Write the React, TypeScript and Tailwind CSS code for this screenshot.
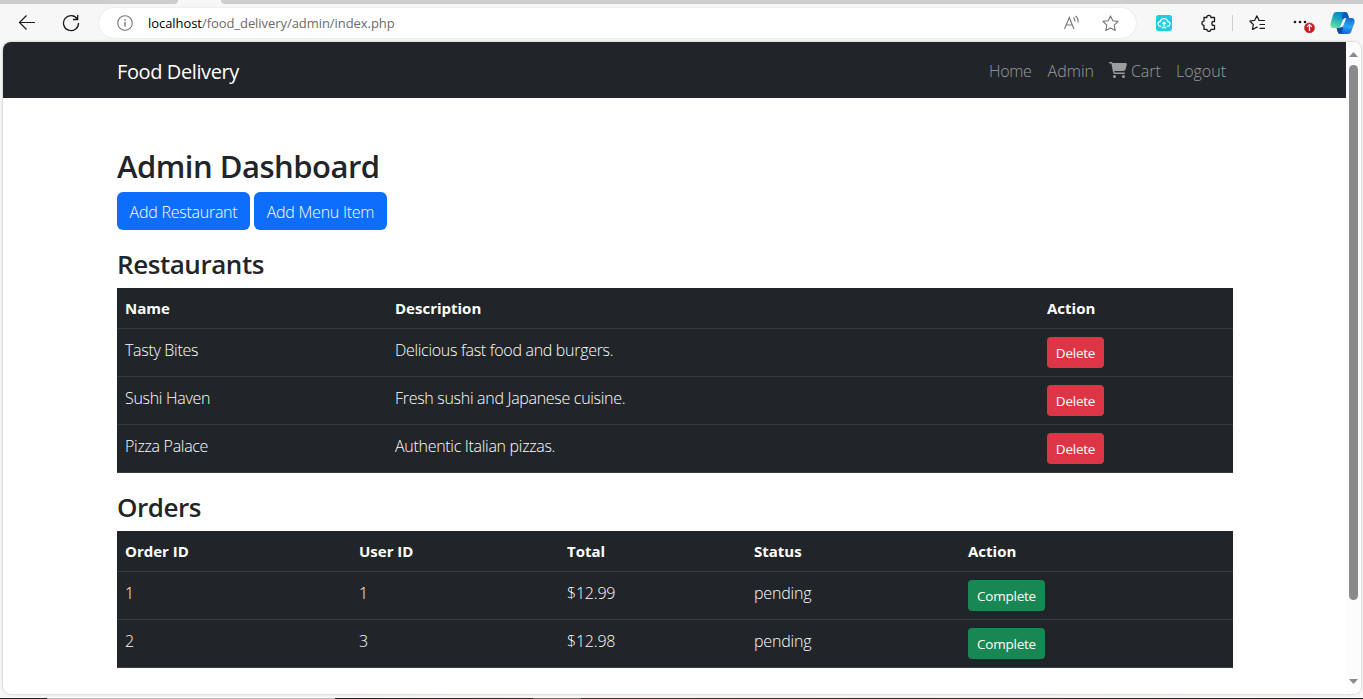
import React from "react";

type Tone = "danger" | "success";

function SmallButton({ tone, children }: { tone: Tone; children: React.ReactNode }) {
  const look = tone === "danger" ? "bg-[#dc3545] w-[57px]" : "bg-[#198754] w-[77px]";
  return (
    <button className={`-mt-px flex h-[31px] items-center justify-center whitespace-nowrap rounded-[4px] pt-px text-[13.5px] font-normal leading-[21px] tracking-[-0.25px] text-white ${look}`}>
      {children}
    </button>
  );
}

function Toolbar() {
  return (
    <div className="flex h-[38px] items-center bg-[#f7f7f7]">
      <svg className="ml-[18px] shrink-0" width="18" height="16" viewBox="0 0 18 16" fill="none" stroke="#1b1b1b" strokeWidth="1.2">
        <path d="M17 7.500H1.500M8.500.5 1.500 7.500l7 7" />
      </svg>
      <svg className="ml-[26px] shrink-0" width="18" height="18" viewBox="0 0 18 18" fill="none" stroke="#1b1b1b" strokeWidth="1.3">
        <path d="M15.400 5.200A7.500 7.500 0 1 0 16.500 9M15.700 1v4.500h-4.700" />
      </svg>
      <div className="ml-[19px] flex h-[30px] w-[1037px] shrink-0 items-center rounded-full bg-white shadow-[0_0_2px_rgba(0,0,0,0.12)]">
        <svg className="ml-[18px] shrink-0" width="16" height="16" viewBox="0 0 16 16" fill="none" stroke="#767676" strokeWidth="1.1">
          <circle cx="8" cy="8" r="7.3" />
          <path d="M8 7v4.500M8 4.300v1.400" strokeWidth="1.4" />
        </svg>
        <div className="ml-[15px] whitespace-nowrap text-[13px] leading-[18px] tracking-[-0.06px] text-[#6b6b6b]">
          <span className="text-black">localhost</span>/food_delivery/admin/index.php
        </div>
        <svg className="ml-auto shrink-0" width="17" height="16" viewBox="0 0 17 16" fill="none" stroke="#767676" strokeWidth="1.1">
          <path d="M1.500 14 6.300 2.500 11 14M3.100 10h6.300M10.300 2.500q2 1.500 1.600 4M12.300 1q3.600 2.200 2.700 6.500" />
        </svg>
        <svg className="ml-[22px] mr-[17px] shrink-0" width="17" height="17" viewBox="0 0 17 17" fill="none" stroke="#767676" strokeWidth="1.1" strokeLinejoin="round">
          <path d="m8.500.9 2.300 4.800 5.300.7-3.900 3.700 1 5.300-4.700-2.500-4.700 2.500 1-5.300L.9 6.400l5.300-.7z" />
        </svg>
      </div>
      <svg className="ml-[20px] shrink-0" width="16" height="16" viewBox="0 0 16 16">
        <rect width="16" height="16" rx="2.500" fill="#20cbe3" />
        <path d="M5.300 11.200H4.700a2.300 2.300 0 0 1-.6-4.600 4 4 0 0 1 7.800 0 2.300 2.300 0 0 1-.6 4.600h-.6M8 7v5.500M6.200 9 8 7.200 9.800 9M5.800 12.700h4.400" fill="none" stroke="#fff" strokeWidth="1.2" />
      </svg>
      <svg className="ml-[28px] shrink-0" width="18" height="18" viewBox="0 0 18 18" fill="none" stroke="#1b1b1b" strokeWidth="1.3" strokeLinejoin="round">
        <path d="M4 3.500h2.800a2.100 2.100 0 0 1 4.200 0h3.500v4h-.8a1.900 1.900 0 0 0 0 3.800h.8v4H11a2.100 2.100 0 0 1-4.200 0H4v-4a2.100 2.100 0 0 1 0-4.200z" />
      </svg>
      <div className="ml-[14px] h-4 w-px shrink-0 bg-[#cfcfcf]" />
      <svg className="ml-[16px] shrink-0" width="17" height="16" viewBox="0 0 17 16" fill="none" stroke="#1b1b1b" strokeWidth="1.2" strokeLinejoin="round">
        <path d="M10.200 5.500 7.800.9 5.600 5.400.8 6l3.500 3.500-.8 5 5-2.600M9.500 5.500H16M10.500 9.500H16M10.500 13.300H16" />
      </svg>
      <svg className="ml-[27px] shrink-0" width="22" height="20" viewBox="0 0 22 20">
        <g fill="#1b1b1b"><circle cx="2" cy="9" r="1.300" /><circle cx="7" cy="9" r="1.300" /><circle cx="12" cy="9" r="1.300" /></g>
        <circle cx="16.500" cy="14.900" r="5" fill="#c42124" stroke="#c42124" strokeWidth=".6" />
        <path d="M16.500 17.900v-6M14.100 13.900 16.500 11.500l2.400 2.400" fill="none" stroke="#fff" strokeWidth="1.200" />
      </svg>
      <svg className="ml-[15px] shrink-0" width="25" height="24" viewBox="0 0 25 24">
        <defs>
          <linearGradient id="cpA" x1=".7" y1="0" x2=".2" y2="1"><stop stopColor="#0b78bd" /><stop offset=".45" stopColor="#19a5c4" /><stop offset="1" stopColor="#6fe39a" /></linearGradient>
          <linearGradient id="cpB" x1=".6" y1="0" x2=".4" y2="1"><stop stopColor="#1a6bd0" /><stop offset=".5" stopColor="#2aa7f2" /><stop offset="1" stopColor="#155be0" /></linearGradient>
        </defs>
        <path d="M6.500 1H15q2.200 0 2.800 2l1.200 4h-2.500q-2.200 0-2.800 2l-2 6q-.7 2-3 2H3.500Q-.5 17 .6 12L3 4q.8-3 3.500-3z" fill="url(#cpA)" />
        <path d="M14 1h1q2.200 0 2.800 2l1.200 4h-2.500q-2.200 0-2.800 2L12 7q0-4 2-6z" fill="#0d59b5" />
        <path d="M18 23h-7.500q-2.200 0-2.700-2l-1.200-4h2q2.200 0 2.800-2l2.300-6q.7-2 2.900-2h5q3.800 0 2.700 5l-2.800 8q-.9 3-3.500 3z" fill="url(#cpB)" />
        <path d="M10.500 23q-2.200 0-2.700-2l-1.200-4h2q2.200 0 2.800-2l1.600 2q-.3 4-2.500 6z" fill="#0a4aa3" />
        <path d="m9.700 16.500 3.200-7.500q.7-2 3.300-2l-2.600 7q-.9 2.500-3.900 2.500z" fill="#f7f7f7" />
      </svg>
    </div>
  );
}

const restaurants = [
  ["Tasty Bites", "Delicious fast food and burgers."],
  ["Sushi Haven", "Fresh sushi and Japanese cuisine."],
  ["Pizza Palace", "Authentic Italian pizzas."],
];
const orders = [
  ["1", "1", "$12.99", "pending"],
  ["2", "3", "$12.98", "pending"],
];

export default function App() {
  return (
    <div className="flex h-[699px] w-[1363px] flex-col overflow-hidden bg-[#f7f7f7] font-['Open_Sans','Noto_Sans',sans-serif] text-[#212529]">
      <div className="flex h-1 justify-between bg-[#f7f7f7]">
        <div className="w-[178px] rounded-br bg-[#cdcdcd]" />
        <div className="w-[1133px] rounded-bl bg-[#cdcdcd] grow-0 basis-[1142px]" />
      </div>
      <Toolbar />
      <div className="ml-[3px] flex h-[652px] w-[1358px] shrink-0 overflow-hidden rounded-lg bg-white shadow-[0_0_2px_1px_#d5d8d8]">
        <div className="w-[1343px]">
          <nav className="flex h-14 items-center bg-[#212529] pl-[114px] pr-[120px] text-[#9b9d9e]">
            <span className="pt-[3px] text-[20px] leading-[30px] tracking-[-0.4px] text-white">Food Delivery</span>
            <div className="ml-auto flex gap-4 pt-px text-[16px] font-light leading-6">
              <a className="tracking-[-0.3px]">Home</a>
              <a>Admin</a>
              <a className="flex items-center gap-1">
                <svg className="-ml-px -mt-0.5" width="18" height="16" viewBox="0 0 576 512" fill="currentColor"><path d="M0 24C0 10.700 10.700 0 24 0h45.500c22 0 41.500 12.800 50.600 32h411c26.300 0 45.500 25 38.600 50.400l-41 152.300c-8.500 31.400-37 53.300-69.500 53.300H170.700l5.400 28.500c2.200 11.300 12.100 19.500 23.600 19.500H488c13.300 0 24 10.700 24 24s-10.700 24-24 24H199.700c-34.600 0-64.300-24.600-70.700-58.500L77.400 54.500C76.700 50.700 73.400 48 69.500 48H24C10.700 48 0 37.300 0 24zM128 464a48 48 0 1 1 96 0 48 48 0 1 1-96 0zm336-48a48 48 0 1 1 0 96 48 48 0 1 1 0-96z" /></svg>
                Cart
              </a>
              <a className="-ml-px">Logout</a>
            </div>
          </nav>
          <main className="px-[114px] pt-12">
            <h1 className="h-[46px] whitespace-nowrap pt-px text-[31px] font-semibold leading-[38px] tracking-[-0.5px]">Admin Dashboard</h1>
            <div className="flex gap-1 text-[16px] font-light tracking-[-0.25px] text-white">
              <button className="h-[38px] w-[133px] whitespace-nowrap rounded-md bg-[#0d6efd] pt-px">Add Restaurant</button>
              <button className="h-[38px] w-[133px] whitespace-nowrap rounded-md bg-[#0d6efd] pt-px">Add Menu Item</button>
            </div>
            <h2 className="h-[58px] pt-[17px] text-[26px] font-semibold leading-[34px] tracking-[-0.45px]">Restaurants</h2>
            <div className="w-[1116px] bg-[#212529] text-[16px] leading-6 text-white">
              <div className="grid h-[41px] grid-cols-[270px_652px_1fr] border-b border-[#373b3e] px-2 pt-2 text-[15px] font-bold">
                <span>Name</span><span>Description</span><span>Action</span>
              </div>
              {restaurants.map(([name, description]) => (
                <div key={name} className="grid h-12 grid-cols-[270px_652px_1fr] border-b border-[#373b3e] px-2 pt-[9px] font-light tracking-[-0.3px]">
                  <span>{name}</span><span>{description}</span>
                  <SmallButton tone="danger">Delete</SmallButton>
                </div>
              ))}
            </div>
            <h2 className="h-[58px] pt-[17px] text-[26px] font-semibold leading-[34px] tracking-[-0.45px]">Orders</h2>
            <div className="w-[1116px] bg-[#212529] text-[16px] leading-6 text-white">
              <div className="grid h-[41px] grid-cols-[234px_208px_187px_214px_1fr] border-b border-[#373b3e] px-2 pt-2 text-[15px] font-bold">
                <span>Order ID</span><span>User ID</span><span>Total</span><span>Status</span><span>Action</span>
              </div>
              {orders.map(([id, user, total, status]) => (
                <div key={id} className="grid h-12 grid-cols-[234px_208px_187px_214px_1fr] border-b border-[#373b3e] px-2 pt-[9px] font-light tracking-[-0.2px]">
                  <span>{id}</span><span>{user}</span><span>{total}</span><span>{status}</span>
                  <SmallButton tone="success">Complete</SmallButton>
                </div>
              ))}
            </div>
          </main>
        </div>
        <div className="flex w-[15px] flex-col items-center bg-[#fcfcfc] pt-[10px]">
          <svg width="9" height="5" viewBox="0 0 9 5"><path d="M0 5 4.500 0 9 5z" fill="#8a8a8a" /></svg>
          <div className="mt-2 h-[535px] w-[9px] rounded-full bg-[#8a8a8a]" />
          <svg className="mt-[79px]" width="9" height="5" viewBox="0 0 9 5"><path d="M0 0h9L4.500 5z" fill="#8a8a8a" /></svg>
        </div>
      </div>
      <div className="mt-auto flex h-px">
        <div className="w-[47px] bg-[#222]" /><div className="w-[288px] bg-[#bdbdbd]" /><div className="w-[198px] bg-linear-to-r from-[#222] to-[#3a2424]" />
        <div className="w-[48px] bg-[#7a6663]" /><div className="flex-1 bg-linear-to-r from-[#43291f] to-[#222]" />
      </div>
    </div>
  );
}
